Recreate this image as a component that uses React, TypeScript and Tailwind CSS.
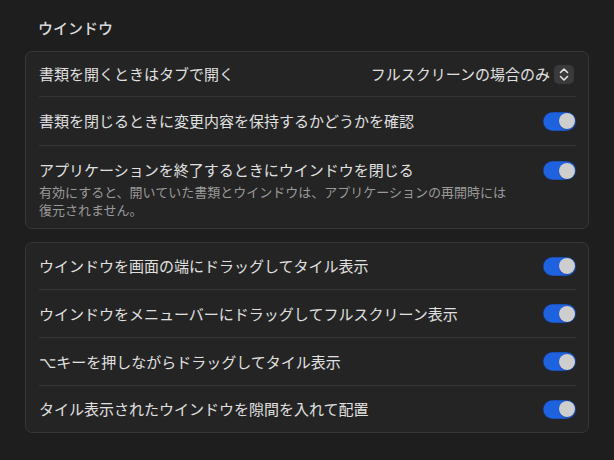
const font = { fontFamily: '"Noto Sans CJK JP", "DejaVu Sans", sans-serif' };

const Toggle = () => (
  <div className="flex h-[19px] w-[33px] shrink-0 items-center justify-end rounded-full bg-[#1f62df] pr-[1.5px] shadow-[inset_0_0_0_0.5px_rgba(0,0,0,0.35)]">
    <div className="h-[16px] w-[16px] rounded-full bg-[#cecece] shadow-[0_0.5px_1px_rgba(0,0,0,0.4)]" />
  </div>
);

const Divider = () => <div className="ml-[13px] mr-[12px] h-px bg-[#343434]" />;

const ToggleRow = ({ label, h }: { label: string; h: string }) => (
  <div className={`flex items-center justify-between pl-[13px] pr-[12px] ${h}`}>
    <span className="text-[15px] leading-[18px] text-[#e0e0e0]">{label}</span>
    <Toggle />
  </div>
);

const Stepper = () => (
  <div className="flex h-[19px] w-[20px] items-center justify-center rounded-[5px] bg-[#3a3a3a]">
    <svg width="12" height="15" viewBox="0 0 12 15" fill="none">
      <path
        d="M2.5 5.5 6 2 9.5 5.5M2.5 9.5 6 13 9.5 9.5"
        stroke="#e2e2e2"
        strokeWidth="1.6"
        strokeLinecap="round"
        strokeLinejoin="round"
      />
    </svg>
  </div>
);

export default function App() {
  return (
    <div className="h-[460px] w-[614px] bg-[#1e1e1e] px-[25px] pt-[19px]" style={font}>
      <h2 className="mb-[14px] pl-[13px] text-[15px] font-medium leading-[18px] text-[#d9d9d9]">
        ウインドウ
      </h2>

      <div className="rounded-[7px] border border-[#363636] bg-[#242424]">
        <div className="flex h-[44px] items-center justify-between pl-[13px] pr-[12px]">
          <span className="text-[15px] leading-[18px] text-[#e0e0e0]">書類を開くときはタブで開く</span>
          <div className="mr-[2px] flex items-center gap-[4px]">
            <span className="text-[15px] leading-[18px] text-[#e0e0e0]">フルスクリーンの場合のみ</span>
            <Stepper />
          </div>
        </div>
        <Divider />
        <ToggleRow label="書類を閉じるときに変更内容を保持するかどうかを確認" h="h-[48px]" />
        <Divider />
        <div className="flex items-start justify-between pb-[10px] pl-[13px] pr-[12px] pt-[15px]">
          <div>
            <div className="text-[15px] leading-[18px] text-[#e0e0e0]">
              アプリケーションを終了するときにウインドウを閉じる
            </div>
            <div className="mt-[4px] text-[13px] leading-[17.5px] text-[#9a9a9a]">
              有効にすると、開いていた書類とウインドウは、アプリケーションの再開時には
              <br />
              復元されません。
            </div>
          </div>
          <Toggle />
        </div>
      </div>

      <div className="mt-[13px] rounded-[7px] border border-[#363636] bg-[#242424]">
        <ToggleRow label="ウインドウを画面の端にドラッグしてタイル表示" h="h-[46px]" />
        <Divider />
        <ToggleRow label="ウインドウをメニューバーにドラッグしてフルスクリーン表示" h="h-[47px]" />
        <Divider />
        <ToggleRow label="⌥キーを押しながらドラッグしてタイル表示" h="h-[47px]" />
        <Divider />
        <ToggleRow label="タイル表示されたウインドウを隙間を入れて配置" h="h-[46px]" />
      </div>
    </div>
  );
}
